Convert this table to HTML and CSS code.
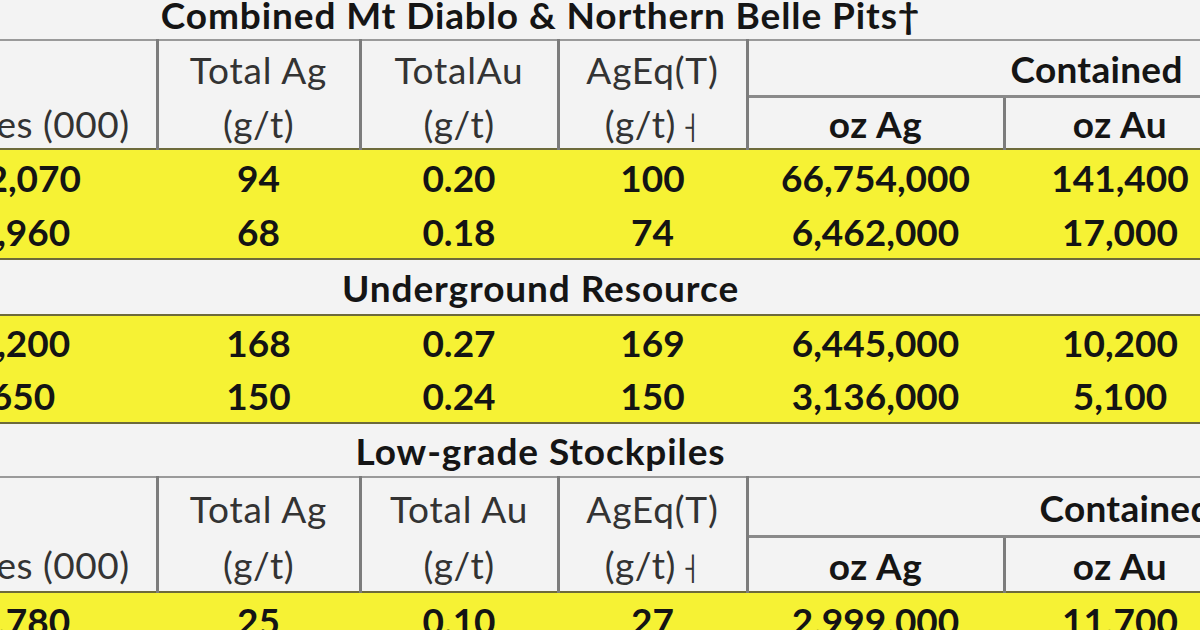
FILE: index.html
```html
<!DOCTYPE html>
<html lang="en">
<head>
<meta charset="utf-8">
<title>Mt Diablo &amp; Northern Belle Resource Table</title>
<link rel="stylesheet" href="styles.css">
</head>
<body>
<table class="grid">
  <colgroup>
    <col class="c1"><col class="c2"><col class="c3"><col class="c4"><col class="c5"><col class="c6"><col class="c7">
  </colgroup>
  <tbody>
    <tr class="sec r-title">
      <td colspan="7" class="sec-title">Combined Mt Diablo &amp; Northern Belle Pits†</td>
    </tr>
    <tr class="h1 r-h1a">
      <td class="vr"></td>
      <td class="vr">Total Ag</td>
      <td class="vr">TotalAu</td>
      <td class="vr">AgEq(T)</td>
      <td colspan="3" class="contained contained-a">Contained</td>
    </tr>
    <tr class="h2 r-h2a">
      <td class="vr">Tonnes (000)</td>
      <td class="vr">(g/t)</td>
      <td class="vr">(g/t)</td>
      <td class="vr">(g/t) <span class="tack">┤</span></td>
      <td class="vr b">oz Ag</td>
      <td class="b vr">oz Au</td>
      <td class="b">oz AgEq</td>
    </tr>
    <tr class="y y-top r-y">
      <td>22,070</td><td>94</td><td>0.20</td><td>100</td><td>66,754,000</td><td>141,400</td><td>70,840,000</td>
    </tr>
    <tr class="y y-bot r-y">
      <td>2,960</td><td>68</td><td>0.18</td><td>74</td><td>6,462,000</td><td>17,000</td><td>7,030,000</td>
    </tr>
    <tr class="sec r-sec1">
      <td colspan="7" class="sec-title">Underground Resource</td>
    </tr>
    <tr class="y y-top r-y2">
      <td>1,200</td><td>168</td><td>0.27</td><td>169</td><td>6,445,000</td><td>10,200</td><td>6,520,000</td>
    </tr>
    <tr class="y y-bot r-y2">
      <td>650</td><td>150</td><td>0.24</td><td>150</td><td>3,136,000</td><td>5,100</td><td>3,136,000</td>
    </tr>
    <tr class="sec r-sec2">
      <td colspan="7" class="sec-title">Low-grade Stockpiles</td>
    </tr>
    <tr class="h1 r-h1b">
      <td class="vr"></td>
      <td class="vr">Total Ag</td>
      <td class="vr">Total Au</td>
      <td class="vr">AgEq(T)</td>
      <td colspan="3" class="contained contained-b">Contained</td>
    </tr>
    <tr class="h2 r-h2b">
      <td class="vr">Tonnes (000)</td>
      <td class="vr">(g/t)</td>
      <td class="vr">(g/t)</td>
      <td class="vr">(g/t) <span class="tack">┤</span></td>
      <td class="vr b">oz Ag</td>
      <td class="b vr">oz Au</td>
      <td class="b">oz AgEq</td>
    </tr>
    <tr class="y y-top r-y">
      <td>3,780</td><td>25</td><td>0.10</td><td>27</td><td>2,999,000</td><td>11,700</td><td>3,240,000</td>
    </tr>
  </tbody>
</table>
</body>
</html>
```

FILE: styles.css
```css
html, body {
  margin: 0;
  padding: 0;
  background: #f3f3f3;
  overflow: hidden;
  width: 1200px;
  height: 630px;
}

.grid {
  border-collapse: collapse;
  table-layout: fixed;
  width: 1647px;
  margin-left: -111px;
  font-family: Lato, "Liberation Sans", sans-serif;
  font-size: 37px;
  color: #333;
}

.c1 { width: 268px; }
.c2 { width: 203px; }
.c3 { width: 198px; }
.c4 { width: 189px; }
.c5 { width: 257px; }
.c6 { width: 232px; }
.c7 { width: 300px; }

.grid td {
  padding: 0;
  text-align: center;
  vertical-align: middle;
  white-space: nowrap;
  line-height: 1;
}

.sec-title {
  font-weight: 700;
  color: #151515;
  letter-spacing: 0.9px;
  padding-right: 344px !important;
}

.r-title { height: 40px; }
.r-title .sec-title {
  vertical-align: top;
  line-height: 30px;
}
.r-h1a { height: 56px; }
.r-h2a { height: 53px; }
.r-y { height: 55px; }
.r-sec1 { height: 56px; }
.r-y2 { height: 54px; }
.r-sec2 { height: 54px; }
.r-h1b { height: 59px; }
.r-h2b { height: 56px; }

.h1 td {
  border-top: 2px solid #9a9a9a;
  padding-top: 2px;
  letter-spacing: 0.8px;
}
.h2 td {
  padding-top: 2px;
  letter-spacing: 0.5px;
}

.vr { border-right: 3px solid #7c7c7c; }

.contained {
  font-weight: 700;
  color: #151515;
  text-align: left !important;
  border-bottom: 3px solid #8a8a8a;
  letter-spacing: 0.3px !important;
}
.contained-a { padding-left: 262px !important; }
.contained-b { padding-left: 291px !important; }

.b { font-weight: 700; color: #151515; }

.tack {
  font-family: "DejaVu Sans Mono", monospace;
  font-size: 24px;
  color: #333;
  letter-spacing: 0;
  vertical-align: 2px;
}

.y td {
  background: #f6f234;
  font-weight: 700;
  color: #141414;
}
.y-top td { border-top: 2px solid #6d6a3a; }
.y-bot td { border-bottom: 2px solid #6d6a3a; }
```
